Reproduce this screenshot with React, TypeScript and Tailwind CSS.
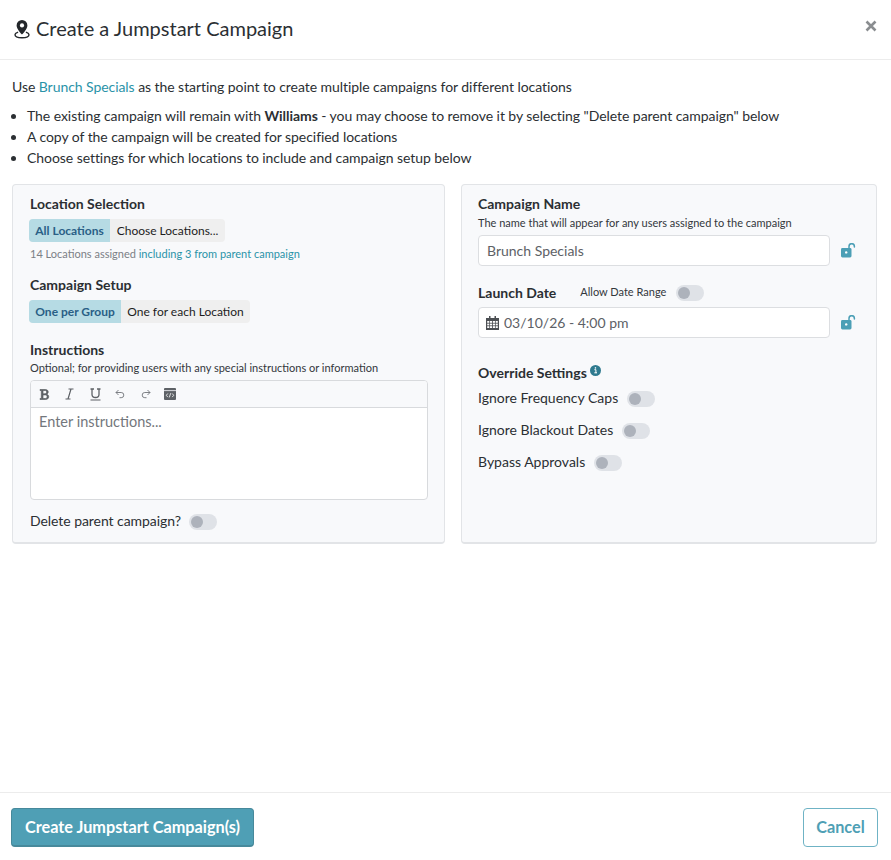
import React from "react";

const Toggle = () => (
  <div className="w-[28px] h-[16px] mt-px rounded-full bg-[#dfe2e7] flex items-center pl-[2px]">
    <div className="w-[12px] h-[12px] rounded-full bg-[#adb2bb]" />
  </div>
);

const Lock = () => (
  <svg width="15" height="15" viewBox="0 0 15 15" className="shrink-0">
    <path d="M8 5V3.400a2.700 2.700 0 0 1 5.400 0V4" fill="none" stroke="#4c9fb6" strokeWidth="1.500" strokeLinecap="round" />
    <rect x="0" y="5" width="10.500" height="9.500" rx="1.400" fill="#4c9fb6" />
    <circle cx="5.200" cy="9.400" r="1.200" fill="#fff" />
  </svg>
);

const Seg = ({ a, b, wa, wb }: { a: string; b: string; wa: string; wb: string }) => (
  <div className="flex h-[23px] w-fit -ml-px rounded-[4px] overflow-hidden text-[12px] leading-[23px] bg-[#efefef] text-[#1d1d1d]">
    <div className={`${wa} bg-[#b6dbe4] text-[#2a5f86] font-bold text-center`}>{a}</div>
    <div className={`${wb} text-center`}>{b}</div>
  </div>
);

export default function App() {
  return (
    <div className="h-[860px] w-[891px] bg-white flex flex-col text-[#2b2f33] font-['Lato',sans-serif] overflow-hidden">
      <header className="h-[60px] shrink-0 border-b border-[#ececec] flex items-center pl-[14px] pr-[14px] pb-[4px]">
        <svg width="16" height="20" viewBox="0 0 16 20" className="mr-[6px] mt-[3px]">
          <path d="M8 1a5.400 5.400 0 0 0-5.400 5.400C2.600 10 8 15.500 8 15.500S13.400 10 13.400 6.400A5.400 5.400 0 0 0 8 1Z" fill="#23272b" />
          <circle cx="8" cy="6.400" r="2.100" fill="#fff" />
          <path d="M3.600 13.300C2 13.900 1 14.700 1 15.700 1 17.400 4.100 18.700 8 18.700s7-1.300 7-3c0-1-1-1.800-2.600-2.400" fill="none" stroke="#23272b" strokeWidth="1.400" strokeLinecap="round" />
        </svg>
        <h1 className="text-[20px] leading-none font-normal text-[#2b2f33]">Create a Jumpstart Campaign</h1>
        <svg width="12" height="12" viewBox="0 0 12 12" className="ml-auto mb-[4px]">
          <path d="M1.500 1.500l9 9M10.500 1.500l-9 9" stroke="#8a8d90" strokeWidth="2.600" />
        </svg>
      </header>

      <main className="flex-1 px-[12px] pt-[17px] min-h-0">
        <p className="text-[14px] tracking-[-0.06px] leading-[20px]">
          Use <span className="text-[#2a93a8]">Brunch Specials</span> as the starting point to create multiple campaigns for different locations
        </p>
        <ul className="mt-[8px] text-[14px] tracking-[-0.06px] leading-[21px] list-disc pl-[15px]">
          <li>The existing campaign will remain with <b>Williams</b> - you may choose to remove it by selecting "Delete parent campaign" below</li>
          <li>A copy of the campaign will be created for specified locations</li>
          <li>Choose settings for which locations to include and campaign setup below</li>
        </ul>

        <div className="mt-[16px] flex gap-[16px] h-[360px]">
          <section className="w-[433px] h-full rounded-[4px] border border-[#e2e4e7] border-b-2 bg-[#f8f9fb] pl-[17px] pr-[16px] pt-[10px]">
            <h2 className="text-[14px] leading-[18px] font-bold">Location Selection</h2>
            <div className="mt-[6px]"><Seg a="All Locations" b="Choose Locations..." wa="w-[81px]" wb="w-[115px]" /></div>
            <p className="mt-[4px] text-[11px] leading-[16px] text-[#7b8086]">14 Locations assigned <span className="text-[#2a93a8]">including 3 from parent campaign</span></p>
            <h2 className="mt-[14px] text-[14px] leading-[18px] font-bold">Campaign Setup</h2>
            <div className="mt-[6px]"><Seg a="One per Group" b="One for each Location" wa="w-[92px]" wb="w-[129px]" /></div>
            <h2 className="mt-[18px] text-[14px] leading-[18px] font-bold">Instructions</h2>
            <p className="mt-px text-[11px] leading-[16px] text-[#33373b]">Optional; for providing users with any special instructions or information</p>
            <div className="mt-[4px] w-[398px] h-[120px] rounded-[4px] border border-[#d8dadd] bg-white overflow-hidden">
              <div className="h-[27px] bg-[#f8f9fb] border-b border-[#d8dadd] flex items-center pl-[8px] text-[#5d6166]">
                <svg width="11" height="13" viewBox="0 0 11 12"><path d="M1 1h5.200c2 0 3 1 3 2.500 0 1.100-.6 1.900-1.700 2.200 1.400.3 2.200 1.200 2.200 2.500C9.700 10 8.500 11 6.400 11H1v-1h1.300V2H1ZM4 2v3.300h2c1.100 0 1.600-.6 1.600-1.700S7.100 2 6 2Zm0 4.400V10h2.300c1.200 0 1.800-.6 1.800-1.800S7.500 6.400 6.200 6.400Z" fill="#5d6166" stroke="#5d6166" strokeWidth=".7" /></svg>
                <svg width="9" height="12" viewBox="0 0 9 12" className="ml-[15px]"><path d="M3.500 1h5M.5 11h5M6 1 3 11" fill="none" stroke="#5d6166" strokeWidth="1.200" /></svg>
                <svg width="11" height="13" viewBox="0 0 11 13" className="ml-[16px]"><path d="M.5 1h3.500M7 1h3.500M2 1v5.500c0 2 1.300 3 3.500 3S9 8.500 9 6.500V1" fill="none" stroke="#5d6166" strokeWidth="1.300" /><path d="M.5 12h10" stroke="#5d6166" strokeWidth="1.200" /></svg>
                <svg width="10" height="10" viewBox="0 0 10 10" className="ml-[14px]"><path d="M3.500 1 1 3.500 3.500 6M1 3.500h5.200a2.600 2.600 0 0 1 0 5.200H4.500" fill="none" stroke="#6f7378" strokeWidth=".9" /></svg>
                <svg width="10" height="10" viewBox="0 0 10 10" className="ml-[16px]"><path d="M6.500 1 9 3.500 6.500 6M9 3.500H3.800a2.600 2.600 0 0 0 0 5.200h1.700" fill="none" stroke="#6f7378" strokeWidth=".9" /></svg>
                <svg width="12" height="12" viewBox="0 0 12 12" className="ml-[13px]"><rect width="12" height="12" rx="1" fill="#5d6166" /><path d="M0 2.600h12" stroke="#f8f9fb" strokeWidth=".8" /><path d="M3.800 5.500 2.300 7.300l1.500 1.800M8.200 5.500l1.500 1.800-1.500 1.800M6.700 5.200 5.300 9.400" fill="none" stroke="#fff" strokeWidth=".8" /></svg>
              </div>
              <div className="pl-[8px] pt-[5px] text-[14.500px] leading-[18px] text-[#73777c]">Enter instructions...</div>
            </div>
            <div className="mt-[12px] flex items-center gap-[8px] text-[14px] tracking-[-0.06px] leading-[18px]">
              <span>Delete parent campaign?</span>
              <Toggle />
            </div>
          </section>

          <section className="w-[416px] h-full rounded-[4px] border border-[#e2e4e7] border-b-2 bg-[#f8f9fb] pl-[16px] pt-[10px]">
            <h2 className="text-[14px] leading-[18px] font-bold">Campaign Name</h2>
            <p className="mt-[2px] text-[11px] leading-[15px] text-[#33373b]">The name that will appear for any users assigned to the campaign</p>
            <div className="mt-[5px] flex items-center gap-[11px]">
              <div className="w-[352px] h-[31px] rounded-[4px] border border-[#dcdee1] bg-white pl-[8px] text-[14px] leading-[29px] text-[#5d6166]">Brunch Specials</div>
              <Lock />
            </div>
            <div className="mt-[17px] flex items-center h-[18px]">
              <span className="text-[14px] font-bold">Launch Date</span>
              <span className="ml-[24px] mt-px text-[11px] text-[#33373b]">Allow Date Range</span>
              <span className="ml-[10px] mt-px"><Toggle /></span>
            </div>
            <div className="mt-[6px] flex items-center gap-[11px]">
              <div className="w-[352px] h-[31px] rounded-[4px] border border-[#dcdee1] bg-white pl-[7px] flex items-center gap-[5px] text-[14px] text-[#5d6166]">
                <svg width="13" height="14" viewBox="0 0 13 14"><path d="M3 0h1.500v2H8.500V0H10v2h3v12H0V2h3Z" fill="#4c4f53" /><g fill="#fff"><rect x="1.200" y="5" width="2.100" height="1.800" /><rect x="4" y="5" width="2.100" height="1.800" /><rect x="6.900" y="5" width="2.100" height="1.800" /><rect x="9.700" y="5" width="2.100" height="1.800" /><rect x="1.200" y="7.600" width="2.100" height="1.800" /><rect x="4" y="7.600" width="2.100" height="1.800" /><rect x="6.900" y="7.600" width="2.100" height="1.800" /><rect x="9.700" y="7.600" width="2.100" height="1.800" /><rect x="1.200" y="10.200" width="2.100" height="1.800" /><rect x="4" y="10.200" width="2.100" height="1.800" /><rect x="6.900" y="10.200" width="2.100" height="1.800" /><rect x="9.700" y="10.200" width="2.100" height="1.800" /></g></svg>
                <span>03/10/26 - 4:00 pm</span>
              </div>
              <Lock />
            </div>
            <div className="mt-[26px] flex items-start gap-[3px]">
              <h2 className="text-[14px] leading-[18px] font-bold">Override Settings</h2>
              <svg width="11" height="11" viewBox="0 0 11 11" className="mt-[1px]"><circle cx="5.500" cy="5.500" r="5.500" fill="#2f7a8f" /><path d="M4.400 4.700h1.500v3h.7M4.300 7.800h2.500" fill="none" stroke="#fff" strokeWidth="1" /><rect x="4.800" y="2.200" width="1.300" height="1.400" fill="#fff" /></svg>
            </div>
            <div className="mt-[7px] flex flex-col gap-[14px] text-[14px] leading-[18px]">
              <div className="flex items-center gap-[9px]"><span>Ignore Frequency Caps</span><Toggle /></div>
              <div className="flex items-center gap-[9px]"><span>Ignore Blackout Dates</span><Toggle /></div>
              <div className="flex items-center gap-[9px]"><span>Bypass Approvals</span><Toggle /></div>
            </div>
          </section>
        </div>
      </main>

      <footer className="h-[68px] shrink-0 border-t border-[#ececec] flex items-start justify-between pl-[11px] pr-[13px] pt-[15px]">
        <button className="w-[243px] h-[39px] rounded-[4px] bg-[#4f9fb5] border border-[#47899b] border-b-2 text-white font-bold text-[16.250px]">Create Jumpstart Campaign(s)</button>
        <button className="w-[75px] h-[39px] rounded-[4px] bg-white border border-[#6fb3c5] text-[#4f9fb5] font-bold text-[16.250px]">Cancel</button>
      </footer>
    </div>
  );
}
